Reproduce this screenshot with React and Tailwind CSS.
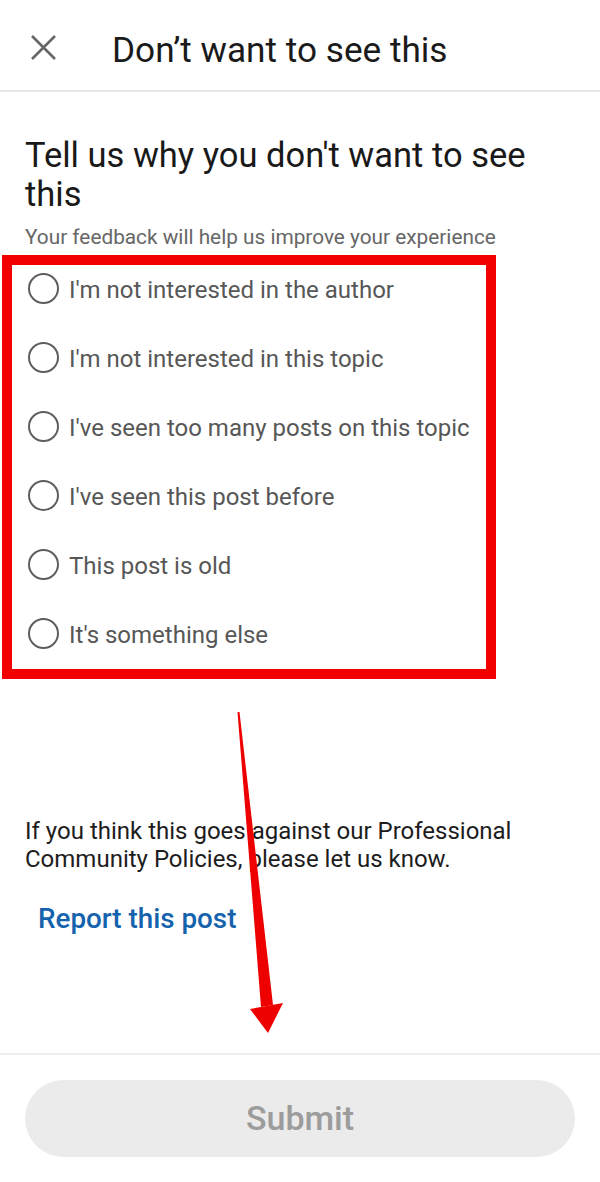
import React, { useState } from "react";

const reasons = [
  "I'm not interested in the author",
  "I'm not interested in this topic",
  "I've seen too many posts on this topic",
  "I've seen this post before",
  "This post is old",
  "It's something else",
];

function RadioRow({ label, checked, onSelect }) {
  return (
    <button
      type="button"
      onClick={onSelect}
      className="flex h-[69px] w-full items-center text-left"
    >
      <span className="ml-[3px] flex h-[31px] w-[31px] shrink-0 items-center justify-center rounded-full border-[2.5px] border-[#5e5e5e]">
        {checked && <span className="h-[15px] w-[15px] rounded-full bg-[#5e5e5e]" />}
      </span>
      <span className="ml-[10px] pt-[2px] text-[24px] leading-[28px] text-[#575757]">
        {label}
      </span>
    </button>
  );
}

export default function App() {
  const [selected, setSelected] = useState(null);

  return (
    <div
      className="relative flex h-[1182px] w-full flex-col overflow-hidden bg-white"
      style={{ fontFamily: "Roboto, 'Noto Sans', Arial, sans-serif" }}
    >
      {/* top bar */}
      <header className="flex h-[92px] shrink-0 items-start border-b-2 border-[#e6e6e6]">
        <svg
          viewBox="0 0 25 25"
          className="ml-[31px] mt-[35px] h-[25px] w-[25px]"
          fill="none"
          stroke="#666666"
          strokeWidth="2.6"
        >
          <path d="M1 1L24 24M24 1L1 24" />
        </svg>
        <h1 className="ml-[56px] mt-[30px] text-[35.2px] leading-[40px] text-[#1a1a1a]">
          Don’t want to see this
        </h1>
      </header>

      <main className="flex flex-1 flex-col px-[25px] pt-[44px]">
        <h2 className="text-[34.5px] leading-[39px] text-[#191919]">
          Tell us why you don't want to see this
        </h2>
        <p className="mt-[10px] text-[20.8px] leading-[26px] text-[#666666]">
          Your feedback will help us improve your experience
        </p>

        <div className="mt-[4px] flex flex-col">
          {reasons.map((r, i) => (
            <RadioRow
              key={r}
              label={r}
              checked={selected === i}
              onSelect={() => setSelected(i)}
            />
          ))}
        </div>

        <p className="mt-[149px] text-[24px] leading-[28px] text-[#1d1d1d]">
          If you think this goes against our Professional Community Policies,
          please let us know.
        </p>
        <a
          href="#report"
          className="ml-[13px] mt-[30px] text-[27.8px] font-medium leading-[32px] text-[#1562ad]"
        >
          Report this post
        </a>
      </main>

      <footer className="shrink-0 border-t-2 border-[#ededed] px-[25px] py-[25px]">
        <button
          type="button"
          disabled={selected === null}
          className="flex h-[77px] w-full items-center justify-center rounded-full bg-[#ebebeb] text-[34px] font-medium text-[#9c9c9c]"
        >
          Submit
        </button>
      </footer>

      {/* red highlight box */}
      <div className="pointer-events-none absolute left-[2px] top-[255px] h-[424px] w-[494px] border-[10px] border-[#f20000]" />

      {/* red arrow */}
      <svg
        className="pointer-events-none absolute left-0 top-0 h-[1182px] w-[600px]"
        viewBox="0 0 600 1182"
      >
        <polygon points="237.5,712 239.5,712 273,1005 261,1007" fill="#ee0000" />
        <polygon points="250,1009 283,1003 268,1033" fill="#ee0000" />
      </svg>
    </div>
  );
}
